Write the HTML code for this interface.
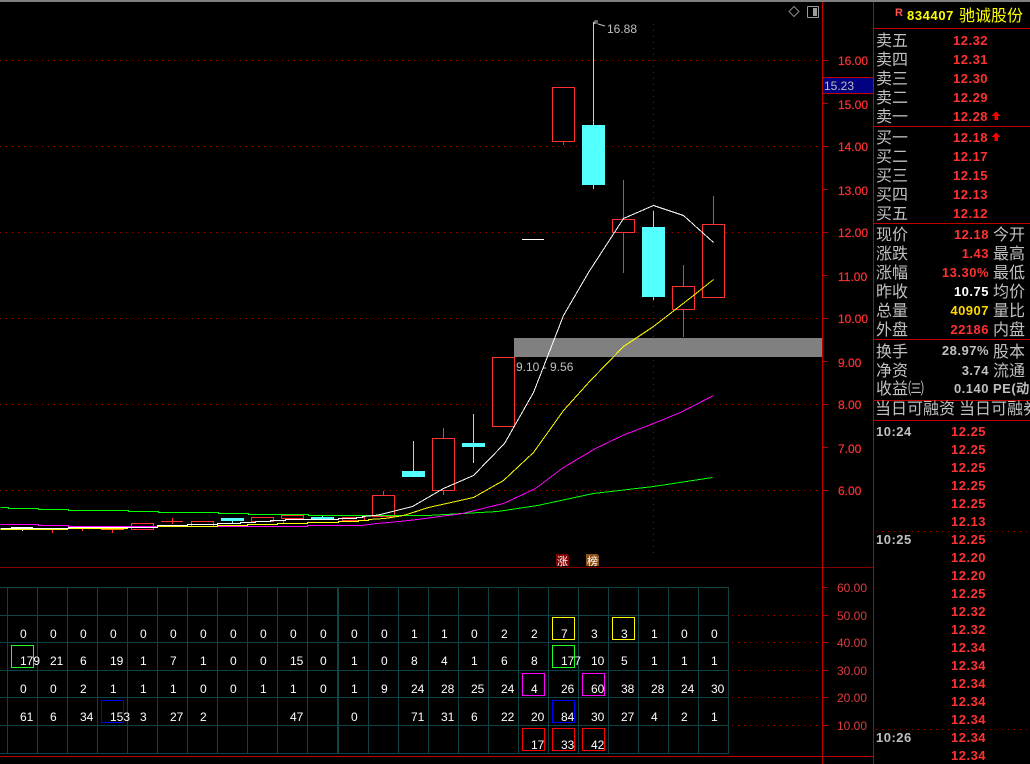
<!DOCTYPE html>
<html><head><meta charset="utf-8">
<style>
html,body{margin:0;padding:0;background:#000;width:1030px;height:764px;overflow:hidden}
svg{display:block}
.l{font:16px "WenQuanYi Zen Hei","Noto Sans CJK SC",sans-serif;fill:#c0c0c0}
.p{font:bold 13px "Liberation Sans",sans-serif;fill:#ff3232;letter-spacing:.5px}
.g{font:bold 13px "Liberation Sans",sans-serif;fill:#c0c0c0;letter-spacing:.5px}
.a{font:12px "Liberation Sans",sans-serif;fill:#ff3232;stroke:#ff3232;stroke-width:.2px}
.n text{font:12px "Liberation Sans",sans-serif;fill:#fff}
.c{shape-rendering:crispEdges}
.r{fill:#000;stroke:#ff3232;stroke-width:1}
.w{stroke:#ff3232;stroke-width:1}
.y{stroke:#54ffff;stroke-width:1}
.f{fill:#54ffff}
.b{fill:none;stroke-width:1}
</style></head><body>
<svg width="1030" height="764" viewBox="0 0 1030 764" xmlns="http://www.w3.org/2000/svg">
<defs>
<pattern id="dh" width="6" height="1" patternUnits="userSpaceOnUse"><rect width="1" height="1" fill="#a00000"/></pattern>
<pattern id="dv" width="1" height="6" patternUnits="userSpaceOnUse"><rect width="1" height="1" fill="#a00000"/></pattern>
</defs>
<rect width="1030" height="764" fill="#000"/>
<g class="c">
<rect x="0" y="0" width="1030" height="2" fill="#808080"/>
<!-- dotted grid -->
<g fill="url(#dh)">
<rect x="0" y="60" width="822" height="1"/><rect x="0" y="146" width="822" height="1"/><rect x="0" y="232" width="822" height="1"/><rect x="0" y="318" width="822" height="1"/><rect x="0" y="404" width="822" height="1"/><rect x="0" y="490" width="822" height="1"/>
<rect x="729" y="615" width="93" height="1"/><rect x="729" y="642" width="93" height="1"/><rect x="729" y="670" width="93" height="1"/><rect x="729" y="697" width="93" height="1"/><rect x="729" y="725" width="93" height="1"/>
<rect x="874" y="531" width="156" height="1"/><rect x="874" y="729" width="156" height="1"/>
</g>
<rect x="653" y="22" width="1" height="534" fill="url(#dv)"/>
<!-- gray band -->
<rect x="514" y="338" width="308" height="19" fill="#808080"/>
<!-- low candles -->
<g>
<path class="w" d="M52.5 530V533M82.5 529V531M112.5 530V533M172.5 518V524M41 528.5H42M63 528.5H64M283.5 521V523"/>
<rect x="11" y="527" width="22" height="2" fill="#fff"/>
<rect x="22" y="529" width="1" height="2" fill="#fff"/>
<rect x="101" y="529" width="23" height="1" fill="#ff8000"/>
<rect class="r" x="131.5" y="523.5" width="22" height="6"/>
<path class="w" d="M161 521.5H183"/>
<rect class="r" x="191.5" y="521.5" width="22" height="5"/>
<rect class="f" x="221" y="518" width="23" height="3"/>
<path class="y" d="M232.5 521V524"/>
<rect class="r" x="251.5" y="517.5" width="22" height="4"/>
<rect class="r" x="281.5" y="515.5" width="22" height="3"/>
<rect class="f" x="311" y="517" width="23" height="3"/>
<path class="y" d="M322.5 515V517"/>
<rect class="r" x="342.5" y="517.5" width="22" height="3"/>
</g>
<!-- candles -->
<path class="w" d="M383.5 491V495M443.5 428V438M443.5 490V495M563.5 142V145M623.5 180V273M683.5 265V337M713.5 196V224"/>
<rect class="r" x="372.5" y="495.5" width="22" height="21"/>
<path class="y" d="M413.5 441V471"/>
<rect class="f" x="402" y="471" width="23" height="6"/>
<rect class="r" x="432.5" y="438.5" width="22" height="52"/>
<path class="y" d="M473.5 414V463"/>
<rect class="f" x="462" y="443" width="23" height="4"/>
<rect class="r" x="492.5" y="357.5" width="22" height="69"/>
<rect x="522" y="239" width="22" height="1" fill="#fff"/>
<rect class="r" x="552.5" y="87.5" width="22" height="54"/>
<path class="y" d="M593.5 22V189"/>
<rect class="f" x="582" y="125" width="23" height="60"/>
<rect class="r" x="612.5" y="219.5" width="22" height="13"/>
<path class="y" d="M653.5 211V300"/>
<rect class="f" x="642" y="227" width="23" height="70"/>
<rect class="r" x="672.5" y="286.5" width="22" height="23"/>
<rect class="r" x="702.5" y="224.5" width="22" height="73"/>
<!-- MA lines -->
<g transform="translate(.5 .5)">
<polyline class="b" stroke="#00ff00" points="0,507 8,507 8,508 38,508 38,509 68,509 68,510 128,510 128,511 158,511 158,512 218,512 218,513 248,513 248,514 308,514 308,515 360,515 427,515 497,511 537,505 593,493 653,486 712,477"/>
<polyline class="b" stroke="#ff00ff" points="0,524 38,524 38,525 68,525 68,526 157,526 157,526 307,526 307,525 361,525 376,523 388,522 398,521 408,520 417,519 462,513 503,503 535,488 563,467 595,448 622,435 653,423 680,412 713,395"/>
<polyline class="b" stroke="#ffff00" points="0,529 67,529 67,528 127,528 127,527 157,527 157,526 217,526 217,525 247,525 247,524 277,524 277,523 307,523 307,522 338,522 338,521 358,521 358,520 368,520 368,519 384,518 403,515 428,507 473,497 503,480 533,452 563,410 590,380 623,346 653,326 693,295 713,279"/>
<polyline class="b" stroke="#ffffff" points="0,528 68,528 68,527 157,527 157,525 187,525 187,524 217,524 217,523 240,523 240,522 255,522 255,521 270,521 270,520 285,520 285,519 338,519 338,518 356,518 356,517 362,517 362,516 374,515 380,514 412,506 443,488 473,475 504,443 533,392 563,315 588,272 623,218 653,205 683,215 713,242"/>
</g>
<!-- lower grid -->
<g stroke="#0e4444" stroke-width="1" fill="none">
<path d="M0 587.5H728.5M0 615.5H728.5M0 642.5H728.5M0 670.5H728.5M0 697.5H728.5M0 725.5H728.5M0 753.5H728.5"/>
<path d="M7.5 587V754M37.5 587V754M67.5 587V754M97.5 587V754M127.5 587V754M157.5 587V754M187.5 587V754M217.5 587V754M247.5 587V754M277.5 587V754M307.5 587V754M338.5 587V754M368.5 587V754M398.5 587V754M428.5 587V754M458.5 587V754M488.5 587V754M518.5 587V754M548.5 587V754M578.5 587V754M608.5 587V754M638.5 587V754M668.5 587V754M698.5 587V754M728.5 587V754"/>
<path d="M337.5 587V754"/>
</g>
<!-- boxes -->
<g class="b">
<rect x="11.5" y="645.5" width="22" height="22" stroke="#20ff20"/>
<rect x="101.5" y="700.5" width="22" height="22" stroke="#0000ff"/>
<rect x="552.5" y="617.5" width="22" height="22" stroke="#ffff00"/>
<rect x="612.5" y="617.5" width="22" height="22" stroke="#ffff00"/>
<rect x="552.5" y="645.5" width="22" height="22" stroke="#20ff20"/>
<rect x="522.5" y="673.5" width="22" height="22" stroke="#ff00ff"/>
<rect x="582.5" y="673.5" width="22" height="22" stroke="#ff00ff"/>
<rect x="552.5" y="700.5" width="22" height="22" stroke="#0000ff"/>
<rect x="522.5" y="728.5" width="22" height="22" stroke="#ff0000"/>
<rect x="552.5" y="728.5" width="22" height="22" stroke="#ff0000"/>
<rect x="582.5" y="728.5" width="22" height="22" stroke="#ff0000"/>
</g>
<!-- frame lines -->
<rect x="0" y="567" width="873" height="1" fill="#800000"/>
<rect x="0" y="756" width="873" height="1" fill="#c00000"/>
<rect x="822" y="2" width="1" height="762" fill="#c00000"/>
<rect x="873" y="2" width="1" height="762" fill="#c00000"/>
<g fill="#c00000">
<rect x="874" y="28" width="156" height="1"/>
<rect x="874" y="126" width="156" height="1"/>
<rect x="874" y="223" width="156" height="1"/>
<rect x="874" y="339" width="156" height="1"/>
<rect x="874" y="400" width="156" height="1"/>
<rect x="874" y="420" width="156" height="1"/>
</g>
<!-- ticks -->
<path stroke="#c00000" stroke-width="1" d="M823 60.5H828M823 103.5H828M823 146.5H828M823 189.5H828M823 232.5H828M823 275.5H828M823 318.5H828M823 361.5H828M823 404.5H828M823 447.5H828M823 490.5H828M823 587.5H828M823 615.5H828M823 642.5H828M823 670.5H828M823 697.5H828M823 725.5H828"/>
<!-- price tag -->
<rect x="823" y="77" width="50" height="17" fill="#000080"/>
<rect x="823" y="77" width="50" height="1" fill="#c00000"/>
<rect x="823" y="93" width="50" height="1" fill="#c00000"/>
<!-- badges -->
<path d="M556 554H567L569 556V566H556Z" fill="#800000"/>
<path d="M586 554H597L599 556V566H586Z" fill="#8b4f12"/>
<!-- icon square -->
<rect x="807.5" y="6.5" width="11" height="11" rx="1" fill="none" stroke="#9a9a9a"/>
<rect x="813" y="8" width="4" height="8" fill="#9a9a9a"/>
</g>
<!-- arrows -->
<path fill="#ff0000" d="M996 111.500L1000.500 116H998V120H994.500V116H991.500ZM996 132.500L1000.500 137H998V141H994.500V137H991.500Z"/>
<path d="M794 6.5L799 11.5L794 16.5L789 11.5Z" fill="none" stroke="#8a8a8a"/>
<path d="M594.5 24L595 21H598M595 23H598M598 24L605 26" fill="none" stroke="#c0c0c0" stroke-width="1"/>
<text x="607" y="33" style="font:12px 'Liberation Sans',sans-serif;fill:#c0c0c0">16.88</text>
<text x="516" y="371" style="font:12px 'Liberation Sans',sans-serif;fill:#c0c0c0">9.10 - 9.56</text>
<text x="824" y="90" style="font:12px 'Liberation Sans',sans-serif;fill:#c0c0c0">15.23</text>
<text class="a" x="838" y="65">16.00</text><text class="a" x="838" y="109">15.00</text><text class="a" x="838" y="151">14.00</text><text class="a" x="838" y="195">13.00</text><text class="a" x="838" y="237">12.00</text><text class="a" x="838" y="281">11.00</text><text class="a" x="838" y="323">10.00</text><text class="a" x="838" y="367">9.00</text><text class="a" x="838" y="409">8.00</text><text class="a" x="838" y="453">7.00</text><text class="a" x="838" y="495">6.00</text>
<g style="font:12px 'Liberation Sans',sans-serif;fill:#e03c3c">
<text x="837" y="592">60.00</text><text x="837" y="620">50.00</text><text x="837" y="647">40.00</text><text x="837" y="675">30.00</text><text x="837" y="702">20.00</text><text x="837" y="730">10.00</text>
</g>
<text x="557" y="565" style="font:11px 'WenQuanYi Zen Hei','Noto Sans CJK SC',sans-serif;fill:#fff">涨</text>
<text x="587" y="565" style="font:11px 'WenQuanYi Zen Hei','Noto Sans CJK SC',sans-serif;fill:#fff">榜</text>
<!-- lower numbers -->
<g class="n">
<text x="20" y="638">0</text><text x="50" y="638">0</text><text x="80" y="638">0</text><text x="110" y="638">0</text><text x="140" y="638">0</text><text x="170" y="638">0</text><text x="200" y="638">0</text><text x="230" y="638">0</text><text x="260" y="638">0</text><text x="290" y="638">0</text><text x="320" y="638">0</text><text x="351" y="638">0</text><text x="381" y="638">0</text><text x="411" y="638">1</text><text x="441" y="638">1</text><text x="471" y="638">0</text><text x="501" y="638">2</text><text x="531" y="638">2</text><text x="561" y="638">7</text><text x="591" y="638">3</text><text x="621" y="638">3</text><text x="651" y="638">1</text><text x="681" y="638">0</text><text x="711" y="638">0</text>
<text x="20" y="665">179</text><text x="50" y="665">21</text><text x="80" y="665">6</text><text x="110" y="665">19</text><text x="140" y="665">1</text><text x="170" y="665">7</text><text x="200" y="665">1</text><text x="230" y="665">0</text><text x="260" y="665">0</text><text x="290" y="665">15</text><text x="320" y="665">0</text><text x="351" y="665">1</text><text x="381" y="665">0</text><text x="411" y="665">8</text><text x="441" y="665">4</text><text x="471" y="665">1</text><text x="501" y="665">6</text><text x="531" y="665">8</text><text x="561" y="665">177</text><text x="591" y="665">10</text><text x="621" y="665">5</text><text x="651" y="665">1</text><text x="681" y="665">1</text><text x="711" y="665">1</text>
<text x="20" y="693">0</text><text x="50" y="693">0</text><text x="80" y="693">2</text><text x="110" y="693">1</text><text x="140" y="693">1</text><text x="170" y="693">1</text><text x="200" y="693">0</text><text x="230" y="693">0</text><text x="260" y="693">1</text><text x="290" y="693">1</text><text x="320" y="693">0</text><text x="351" y="693">1</text><text x="381" y="693">9</text><text x="411" y="693">24</text><text x="441" y="693">28</text><text x="471" y="693">25</text><text x="501" y="693">24</text><text x="531" y="693">4</text><text x="561" y="693">26</text><text x="591" y="693">60</text><text x="621" y="693">38</text><text x="651" y="693">28</text><text x="681" y="693">24</text><text x="711" y="693">30</text>
<text x="20" y="721">61</text><text x="50" y="721">6</text><text x="80" y="721">34</text><text x="110" y="721">153</text><text x="140" y="721">3</text><text x="170" y="721">27</text><text x="200" y="721">2</text><text x="290" y="721">47</text><text x="351" y="721">0</text><text x="411" y="721">71</text><text x="441" y="721">31</text><text x="471" y="721">6</text><text x="501" y="721">22</text><text x="531" y="721">20</text><text x="561" y="721">84</text><text x="591" y="721">30</text><text x="621" y="721">27</text><text x="651" y="721">4</text><text x="681" y="721">2</text><text x="711" y="721">1</text>
<text x="531" y="749">17</text><text x="561" y="749">33</text><text x="591" y="749">42</text>
</g>
<!-- panel header -->
<text x="895" y="16" style="font:bold 11px 'Liberation Sans',sans-serif;fill:#ff5050">R</text>
<text x="907" y="20" style="font:bold 13px 'Liberation Sans',sans-serif;fill:#ffff00;letter-spacing:.6px">834407</text>
<text x="959" y="21" style="font:16px 'WenQuanYi Zen Hei','Noto Sans CJK SC',sans-serif;fill:#ffff00">驰诚股份</text>
<!-- order book -->
<text class="l" x="876" y="46">卖五</text><text class="l" x="876" y="65">卖四</text><text class="l" x="876" y="84">卖三</text><text class="l" x="876" y="103">卖二</text><text class="l" x="876" y="122">卖一</text>
<text class="l" x="876" y="143">买一</text><text class="l" x="876" y="162">买二</text><text class="l" x="876" y="181">买三</text><text class="l" x="876" y="200">买四</text><text class="l" x="876" y="219">买五</text>
<text class="p" x="953" y="45">12.32</text><text class="p" x="953" y="64">12.31</text><text class="p" x="953" y="83">12.30</text><text class="p" x="953" y="102">12.29</text><text class="p" x="953" y="121">12.28</text>
<text class="p" x="953" y="142">12.18</text><text class="p" x="953" y="161">12.17</text><text class="p" x="953" y="180">12.15</text><text class="p" x="953" y="199">12.13</text><text class="p" x="953" y="218">12.12</text>
<!-- quote -->
<text class="l" x="876" y="240">现价</text><text class="l" x="876" y="259">涨跌</text><text class="l" x="876" y="278">涨幅</text><text class="l" x="876" y="297">昨收</text><text class="l" x="876" y="316">总量</text><text class="l" x="876" y="335">外盘</text>
<text class="l" x="993" y="240">今开</text><text class="l" x="993" y="259">最高</text><text class="l" x="993" y="278">最低</text><text class="l" x="993" y="297">均价</text><text class="l" x="993" y="316">量比</text><text class="l" x="993" y="335">内盘</text>
<text class="p" x="989" y="239" text-anchor="end">12.18</text><text class="p" x="989" y="258" text-anchor="end">1.43</text><text class="p" x="989" y="277" text-anchor="end">13.30%</text>
<text class="p" x="989" y="296" text-anchor="end" style="fill:#fff">10.75</text><text class="p" x="989" y="315" text-anchor="end" style="fill:#ffd800">40907</text><text class="p" x="989" y="334" text-anchor="end">22186</text>
<text class="l" x="876" y="357">换手</text><text class="l" x="876" y="376">净资</text><text class="l" x="876" y="394">收益㈢</text>
<text class="l" x="993" y="357">股本</text><text class="l" x="993" y="376">流通</text>
<text class="g" x="993" y="393">PE(动</text>
<text class="g" x="989" y="355" text-anchor="end">28.97%</text><text class="g" x="989" y="375" text-anchor="end">3.74</text><text class="g" x="989" y="393" text-anchor="end">0.140</text>
<text class="l" x="875" y="414">当日可融资</text><text class="l" x="959" y="414">当日可融券</text>
<!-- ticks list -->
<text class="g" x="876" y="436">10:24</text><text class="g" x="876" y="544">10:25</text><text class="g" x="876" y="742">10:26</text>
<text class="p" x="951" y="436">12.25</text><text class="p" x="951" y="454">12.25</text><text class="p" x="951" y="472">12.25</text><text class="p" x="951" y="490">12.25</text><text class="p" x="951" y="508">12.25</text><text class="p" x="951" y="526">12.13</text><text class="p" x="951" y="544">12.25</text><text class="p" x="951" y="562">12.20</text><text class="p" x="951" y="580">12.20</text><text class="p" x="951" y="598">12.25</text><text class="p" x="951" y="616">12.32</text><text class="p" x="951" y="634">12.32</text><text class="p" x="951" y="652">12.34</text><text class="p" x="951" y="670">12.34</text><text class="p" x="951" y="688">12.34</text><text class="p" x="951" y="706">12.34</text><text class="p" x="951" y="724">12.34</text><text class="p" x="951" y="742">12.34</text><text class="p" x="951" y="760">12.34</text>
</svg>
</body></html>
